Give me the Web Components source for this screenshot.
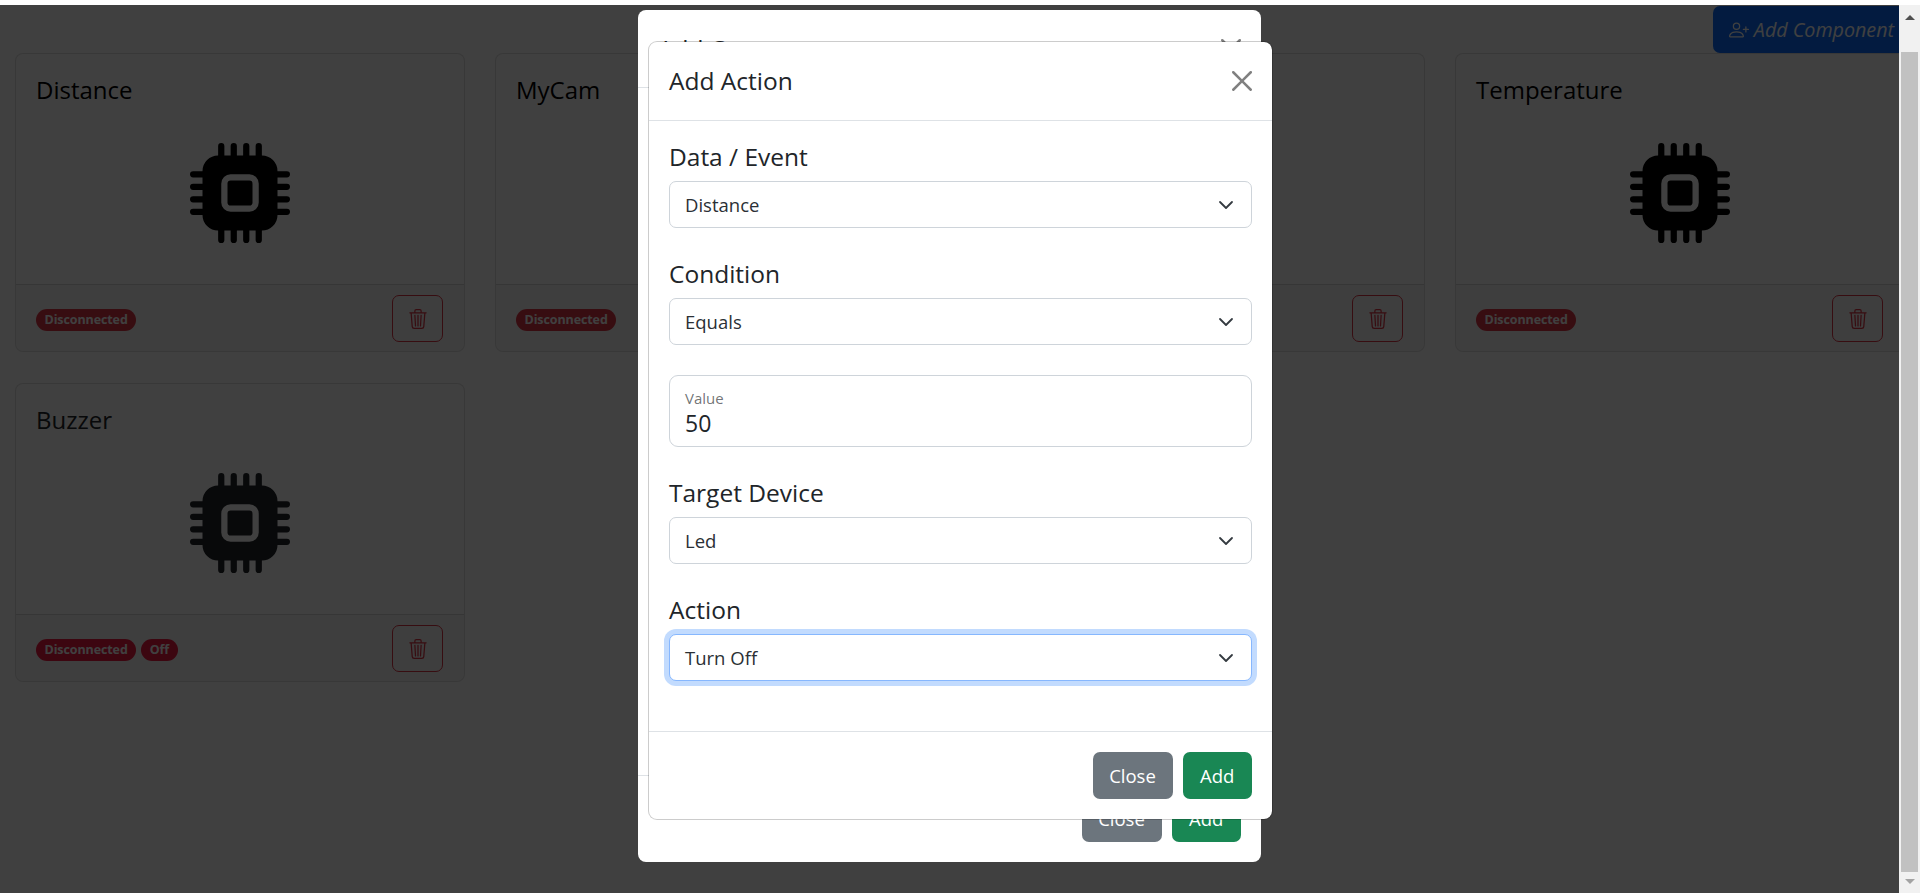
<!DOCTYPE html>
<html lang="en">
<head>
<meta charset="utf-8">
<title>Components</title>
<style>
  html, body { margin: 0; height: 100%; overflow: hidden; background: #fff; }
  body { font-family: "Open Sans", "Liberation Sans", sans-serif; color: #212529; }
</style>
</head>
<body>
<app-shell>
  <add-button slot="top"></add-button>
  <component-card slot="cards" name="Distance"></component-card>
  <component-card slot="cards" name="MyCam"></component-card>
  <component-card slot="cards" name="Led"></component-card>
  <component-card slot="cards" name="Temperature"></component-card>
  <component-card slot="cards" name="Buzzer" soft off></component-card>

  <modal-box slot="under" heading="Add Component" style="--foot: 87px; --foot-pad: 19px"></modal-box>
  <modal-box slot="over" heading="Add Action" bordered style="--head: 79px">
    <form-select label="Data / Event" value="Distance"></form-select>
    <form-select label="Condition" value="Equals"></form-select>
    <form-float label="Value" value="50"></form-float>
    <form-select label="Target Device" value="Led"></form-select>
    <form-select label="Action" value="Turn Off" focused></form-select>
  </modal-box>
</app-shell>

<script>
const ICON_CPU = `<svg xmlns="http://www.w3.org/2000/svg" viewBox="0 0 16 16" fill="currentColor" width="100" height="100"><path d="M6.5 6a.5.5 0 0 0-.5.5v3a.5.5 0 0 0 .5.5h3a.5.5 0 0 0 .5-.5v-3a.5.5 0 0 0-.5-.5h-3z"/><path d="M5.5.5a.5.5 0 0 0-1 0V2A2.5 2.5 0 0 0 2 4.5H.5a.5.5 0 0 0 0 1H2v1H.5a.5.5 0 0 0 0 1H2v1H.5a.5.5 0 0 0 0 1H2v1H.5a.5.5 0 0 0 0 1H2A2.5 2.5 0 0 0 4.5 14v1.5a.5.5 0 0 0 1 0V14h1v1.5a.5.5 0 0 0 1 0V14h1v1.5a.5.5 0 0 0 1 0V14h1v1.5a.5.5 0 0 0 1 0V14a2.5 2.5 0 0 0 2.5-2.5h1.5a.5.5 0 0 0 0-1H14v-1h1.5a.5.5 0 0 0 0-1H14v-1h1.5a.5.5 0 0 0 0-1H14v-1h1.5a.5.5 0 0 0 0-1H14A2.5 2.5 0 0 0 11.5 2V.5a.5.5 0 0 0-1 0V2h-1V.5a.5.5 0 0 0-1 0V2h-1V.5a.5.5 0 0 0-1 0V2h-1V.5zm1 4.5h3A1.5 1.5 0 0 1 11 6.5v3A1.5 1.5 0 0 1 9.5 11h-3A1.5 1.5 0 0 1 5 9.5v-3A1.5 1.5 0 0 1 6.5 5z"/></svg>`;
const ICON_TRASH = `<svg xmlns="http://www.w3.org/2000/svg" viewBox="0 0 16 16" fill="currentColor" width="20" height="20"><path d="M6.5 1h3a.5.5 0 0 1 .5.5v1H6v-1a.5.5 0 0 1 .5-.5ZM11 2.5v-1A1.5 1.5 0 0 0 9.5 0h-3A1.5 1.5 0 0 0 5 1.5v1H2.506a.58.58 0 0 0-.01 0H1.5a.5.5 0 0 0 0 1h.538l.853 10.66A2 2 0 0 0 4.885 16h6.23a2 2 0 0 0 1.994-1.84l.853-10.66h.538a.5.5 0 0 0 0-1h-.995a.59.59 0 0 0-.01 0H11Zm1.958 1-.846 10.58a1 1 0 0 1-.997.92h-6.23a1 1 0 0 1-.997-.92L3.042 3.5h9.916Zm-7.487 1a.5.5 0 0 1 .528.47l.5 8.5a.5.5 0 0 1-.998.06L5 5.03a.5.5 0 0 1 .47-.53Zm5.058 0a.5.5 0 0 1 .47.53l-.5 8.5a.5.5 0 1 1-.998-.06l.5-8.5a.5.5 0 0 1 .528-.47ZM8 4.5a.5.5 0 0 1 .5.5v8.5a.5.5 0 0 1-1 0V5a.5.5 0 0 1 .5-.5Z"/></svg>`;
const ICON_PERSON_PLUS = `<svg xmlns="http://www.w3.org/2000/svg" viewBox="0 0 16 16" fill="currentColor" width="20" height="20"><path d="M6 8a3 3 0 1 0 0-6 3 3 0 0 0 0 6zm2-3a2 2 0 1 1-4 0 2 2 0 0 1 4 0zm4 8c0 1-1 1-1 1H1s-1 0-1-1 1-4 6-4 6 3 6 4zm-1-.004c-.001-.246-.154-.986-.832-1.664C9.516 10.68 8.289 10 6 10c-2.29 0-3.516.68-4.168 1.332-.678.678-.83 1.418-.832 1.664h10z"/><path fill-rule="evenodd" d="M13.5 5a.5.5 0 0 1 .5.5V7h1.5a.5.5 0 0 1 0 1H14v1.5a.5.5 0 0 1-1 0V8h-1.5a.5.5 0 0 1 0-1H13V5.5a.5.5 0 0 1 .5-.5z"/></svg>`;
const ICON_CLOSE = `<svg xmlns="http://www.w3.org/2000/svg" viewBox="0 0 16 16" fill="currentColor" width="20" height="20"><path d="M.293.293a1 1 0 011.414 0L8 6.586 14.293.293a1 1 0 111.414 1.414L9.414 8l6.293 6.293a1 1 0 01-1.414 1.414L8 9.414l-6.293 6.293a1 1 0 01-1.414-1.414L6.586 8 .293 1.707a1 1 0 010-1.414z"/></svg>`;
const ICON_CHEVRON = `<svg xmlns="http://www.w3.org/2000/svg" viewBox="0 0 16 16" width="16" height="16"><path fill="none" stroke="#343a40" stroke-linecap="round" stroke-linejoin="round" stroke-width="1.8" d="M2 5l6 6 6-6"/></svg>`;

// Armazon de la pagina: contenido, velo y barra de scroll
class AppShell extends HTMLElement {
  constructor() {
    super();
    this.attachShadow({ mode: 'open' });
    this.shadowRoot.innerHTML = `
    <style>
      :host { display: flex; height: 893px; width: 1920px; overflow: hidden; }
      .page { position: relative; flex: 1; min-width: 0; overflow: hidden; background: #fff; padding-top: 6px; }
      .top { display: flex; justify-content: flex-end; height: 47px; margin-right: -15px; }
      .cards { display: grid; grid-template-columns: repeat(4, 450px); gap: 31px 30px; padding-left: 15px; }
      .veil { position: absolute; inset: 5px 0 0 0; background: rgba(0,0,0,.75); }
      .layer { position: absolute; }
      .under { left: 637px; top: 9px; width: 625px; height: 854px; }
      .over { left: 648px; top: 41px; width: 625px; height: 779px; }
      .bar { width: 21px; flex: none; background: #f1f1f1; display: flex; flex-direction: column; align-items: center; margin-top: 5px; }
      .up, .down { width: 0; height: 0; border-left: 5px solid transparent; border-right: 5px solid transparent; }
      .up { border-bottom: 5px solid #505050; margin-top: 10px; }
      .thumb { width: 17px; height: 820px; background: #c1c1c1; margin-top: 32px; margin-left: -1px; }
      .down { border-top: 5px solid #a3a3a3; margin-top: 7px; }
    </style>
    <div class="page">
      <div class="top"><slot name="top"></slot></div>
      <div class="cards"><slot name="cards"></slot></div>
      <div class="veil"></div>
      <div class="layer under"><slot name="under"></slot></div>
      <div class="layer over"><slot name="over"></slot></div>
    </div>
    <div class="bar"><div class="up"></div><div class="thumb"></div><div class="down"></div></div>`;
  }
}

class AddButton extends HTMLElement {
  constructor() {
    super();
    this.attachShadow({ mode: 'open' });
    this.shadowRoot.innerHTML = `
    <style>
      :host { display: inline-flex; align-items: center; gap: 5px; height: 47px; box-sizing: border-box; padding: 0 20px 0 16px;
        background: #0d6efd; border-radius: 7px; color: #fff; font-size: 19.7px; font-style: italic; white-space: nowrap; }
      svg { display: block; }
    </style>
    ${ICON_PERSON_PLUS}<span>Add Component</span>`;
  }
}

class ComponentCard extends HTMLElement {
  constructor() {
    super();
    this.attachShadow({ mode: 'open' });
  }

  connectedCallback() {
    const name = this.getAttribute('name');
    const soft = this.hasAttribute('soft');
    const off = this.hasAttribute('off');
    this.shadowRoot.innerHTML = `
    <style>
      :host { display: flex; flex-direction: column; height: 299px; box-sizing: border-box; background: #fff;
        border: 1px solid rgba(0,0,0,.125); border-radius: 8px; overflow: hidden; color: ${soft ? '#212529' : '#000'}; }
      .body { flex: 1; padding: 21px 20px 0; }
      h5 { margin: 0; font-size: 24px; font-weight: 400; line-height: 30px; }
      .icon { display: flex; justify-content: center; margin-top: 38px; }
      svg { display: block; }
      .foot { display: flex; justify-content: space-between; align-items: center; height: 67px; box-sizing: border-box;
        padding: 0 21px 0 20px; border-top: 1px solid rgba(0,0,0,.125); background: rgba(0,0,0,.03); }
      .badges { display: flex; gap: 5px; padding-top: 4px; }
      .badge { background: ${soft ? '#f01840' : '#dc3545'}; color: #fff; font-size: 12.5px; font-weight: 700; line-height: 22px; height: 22px;
        padding: 0 8.5px; border-radius: 11px; letter-spacing: -.1px; }
      .del { width: 51px; height: 47px; box-sizing: border-box; display: flex; align-items: center; justify-content: center;
        border: 1px solid #dc3545; border-radius: 7px; color: #dc3545; margin-top: 1px; }
    </style>
    <div class="body"><h5>${name}</h5><div class="icon">${ICON_CPU}</div></div>
    <div class="foot">
      <div class="badges"><span class="badge">Disconnected</span>${off ? '<span class="badge">Off</span>' : ''}</div>
      <div class="del">${ICON_TRASH}</div>
    </div>`;
  }
}

class ModalBox extends HTMLElement {
  constructor() {
    super();
    this.attachShadow({ mode: 'open' });
  }

  connectedCallback() {
    const bordered = this.hasAttribute('bordered');
    this.shadowRoot.innerHTML = `
    <style>
      :host { display: flex; flex-direction: column; height: 100%; box-sizing: border-box; background: #fff; border-radius: 9px;
        border: 1px solid ${bordered ? 'rgba(0,0,0,.2)' : 'transparent'}; background-clip: padding-box; }
      header { display: flex; justify-content: space-between; align-items: center; height: var(--head, 78px); box-sizing: border-box;
        padding: 0 20px; border-bottom: 1px solid #dee2e6; flex: none; }
      h5 { margin: 0; font-size: 24.5px; font-weight: 400; line-height: 30px; }
      .x { color: #808080; display: block; height: 20px; }
      .main { flex: 1; padding: 21px 20px 0; display: flex; flex-direction: column; }
      footer { flex: none; display: flex; justify-content: flex-end; gap: 10px; height: var(--foot, 88px); box-sizing: border-box;
        padding: var(--foot-pad, 20px) 20px 0; border-top: 1px solid #dee2e6; }
      button { height: 47px; border: 0; border-radius: 7px; color: #fff; font: inherit; font-size: 18.5px; padding: 0; }
      .close { width: 80px; background: #6c757d; }
      .add { width: 69.5px; background: #198754; }
    </style>
    <header><h5>${this.getAttribute('heading')}</h5><span class="x">${ICON_CLOSE}</span></header>
    <div class="main"><slot></slot></div>
    <footer><button class="close">Close</button><button class="add">Add</button></footer>`;
  }
}

class FormSelect extends HTMLElement {
  constructor() {
    super();
    this.attachShadow({ mode: 'open' });
  }

  connectedCallback() {
    const focused = this.hasAttribute('focused');
    this.shadowRoot.innerHTML = `
    <style>
      :host { display: block; margin-bottom: 31px; }
      label { display: block; font-size: 24.5px; line-height: 30px; height: 30px; margin-bottom: 9px; }
      .sel { display: flex; justify-content: space-between; align-items: center; height: 47px; box-sizing: border-box; padding: 0 17px 0 15px;
        border: 1px solid ${focused ? '#86b7fe' : '#ced4da'}; border-radius: 7px; font-size: 18.5px; color: #2b3035; background: #fff;
        ${focused ? 'box-shadow: 0 0 0 5px rgba(13,110,253,.25);' : ''} }
      svg { display: block; }
    </style>
    <label>${this.getAttribute('label')}</label>
    <div class="sel"><span>${this.getAttribute('value')}</span>${ICON_CHEVRON}</div>`;
  }
}

class FormFloat extends HTMLElement {
  constructor() {
    super();
    this.attachShadow({ mode: 'open' });
    this.shadowRoot.innerHTML = `
    <style>
      :host { display: block; margin: -1px 0 31px; }
      .box { height: 72px; box-sizing: border-box; padding: 13px 15px 0; border: 1px solid #ced4da; border-radius: 9px; background: #fff; }
      .lab { font-size: 15px; line-height: 19px; color: rgba(33,37,41,.65); }
      .val { font-size: 23px; line-height: 30px; }
    </style>`;
  }

  connectedCallback() {
    const box = document.createElement('div');
    box.className = 'box';
    box.innerHTML = `<div class="lab">${this.getAttribute('label')}</div><div class="val">${this.getAttribute('value')}</div>`;
    this.shadowRoot.appendChild(box);
  }
}

customElements.define('app-shell', AppShell);
customElements.define('add-button', AddButton);
customElements.define('component-card', ComponentCard);
customElements.define('modal-box', ModalBox);
customElements.define('form-select', FormSelect);
customElements.define('form-float', FormFloat);
</script>
</body>
</html>
